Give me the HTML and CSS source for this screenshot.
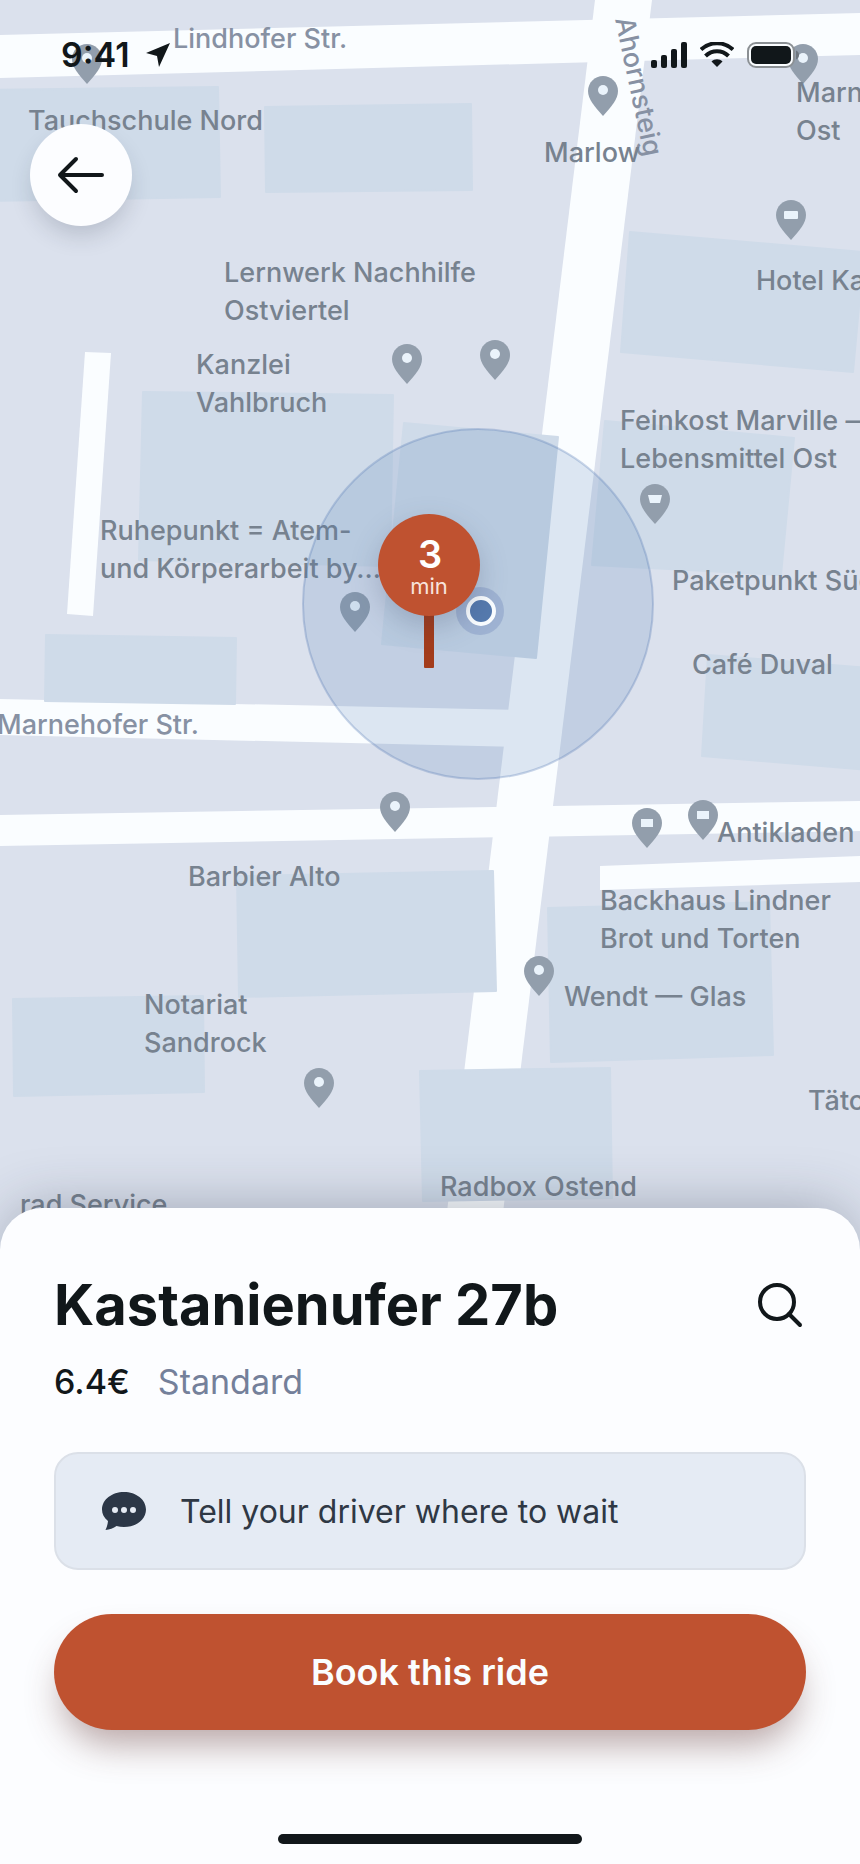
FILE: index.html
```html
<!doctype html>
<html lang="en">
    <head>
        <meta charset="utf-8">
        <title>Book a ride</title>
        <meta name="viewport" content="width=device-width, initial-scale=1">
        <link rel="stylesheet" href="styles.css">
    </head>
    <body>
        <main class="screen">
            <section class="map-area">
                <svg class="map" viewBox="0 0 860 1264" preserveAspectRatio="xMidYMin slice" role="img" aria-label="Map">
                    <defs>
                        <path id="pin" d="M0 0c-8.300 0-15 6.700-15 15 0 8 6.500 15.500 15 25 8.500-9.500 15-17 15-25C15 6.700 8.300 0 0 0z" />
                    </defs>

                    <g class="roads">
                        <path d="M0 35 860 13V55L0 78z" />
                        <path d="M595 0H652L491 1310H435z" />
                        <path d="M85 352 111 353 93 616 67 614z" />
                        <path d="M0 699 520 710V747L0 735z" />
                        <path d="M0 815 860 801V831L0 846z" />
                        <path d="M600 866 860 856V882L600 890z" />
                    </g>

                    <g class="buildings">
                        <path d="M-10 90 218 87 220 197-10 201z" />
                        <path d="M265 107 471 104 472 190 266 192z" />
                        <path d="M630 232 864 252 853 372 621 352z" />
                        <path d="M143 392 393 395 390 566 139 560z" />
                        <path d="M404 423 558 437 536 658 382 644z" />
                        <path d="M605 421 794 438 781 575 592 565z" />
                        <path d="M708 655 870 668V770L702 756z" />
                        <path d="M46 635 236 638 235 704 45 701z" />
                        <path d="M237 876 493 871 496 991 239 997z" />
                        <path d="M13 999 203 996 204 1092 14 1096z" />
                        <path d="M548 908 769 902 773 1055 551 1062z" />
                        <path d="M420 1071 610 1068 612 1198 423 1201z" />
                    </g>

                    <g class="pins">
                        <use href="#pin" x="87" y="44" />
                        <use href="#pin" x="603" y="76" />
                        <use href="#pin" x="803" y="44" />
                        <use href="#pin" x="791" y="200" />
                        <use href="#pin" x="407" y="344" />
                        <use href="#pin" x="495" y="340" />
                        <use href="#pin" x="355" y="592" />
                        <use href="#pin" x="655" y="484" />
                        <use href="#pin" x="395" y="792" />
                        <use href="#pin" x="647" y="808" />
                        <use href="#pin" x="703" y="800" />
                        <use href="#pin" x="539" y="956" />
                        <use href="#pin" x="319" y="1068" />
                    </g>

                    <g class="pin-marks">
                        <circle cx="87" cy="58" r="5" />
                        <circle cx="603" cy="90" r="5" />
                        <circle cx="803" cy="58" r="5" />
                        <circle cx="407" cy="358" r="5" />
                        <circle cx="495" cy="354" r="5" />
                        <circle cx="355" cy="606" r="5" />
                        <circle cx="395" cy="806" r="5" />
                        <circle cx="539" cy="970" r="5" />
                        <circle cx="319" cy="1082" r="5" />
                        <rect x="784" y="211" width="14" height="8" rx="1" />
                        <rect x="641" y="819" width="12" height="8" />
                        <rect x="697" y="811" width="12" height="8" />
                        <path d="M648 495h14l-2 8h-10z" />
                    </g>

                    <g class="streets">
                        <text x="173" y="48">Lindhofer Str.</text>
                        <text x="-3" y="734">Marnehofer Str.</text>
                        <text transform="translate(615 19) rotate(78)">Ahornsteig</text>
                    </g>

                    <g class="places">
                        <text x="28" y="130">Tauchschule Nord</text>
                        <text x="544" y="162">Marlow</text>
                        <text x="796" y="102">Marnehof</text>
                        <text x="796" y="140">Ost</text>
                        <text x="756" y="290">Hotel Kastanie</text>
                        <text x="224" y="282">Lernwerk Nachhilfe</text>
                        <text x="224" y="320">Ostviertel</text>
                        <text x="196" y="374">Kanzlei</text>
                        <text x="196" y="412">Vahlbruch</text>
                        <text x="620" y="430">Feinkost Marville —</text>
                        <text x="620" y="468">Lebensmittel Ost</text>
                        <text x="100" y="540">Ruhepunkt = Atem-</text>
                        <text x="100" y="578">und Körperarbeit by...</text>
                        <text x="672" y="590">Paketpunkt Süd</text>
                        <text x="692" y="674">Café Duval</text>
                        <text x="717" y="842">Antikladen</text>
                        <text x="188" y="886">Barbier Alto</text>
                        <text x="600" y="910">Backhaus Lindner</text>
                        <text x="600" y="948">Brot und Torten</text>
                        <text x="564" y="1006">Wendt — Glas</text>
                        <text x="144" y="1014">Notariat</text>
                        <text x="144" y="1052">Sandrock</text>
                        <text x="808" y="1110">Tätowierer</text>
                        <text x="440" y="1196">Radbox Ostend</text>
                        <text x="20" y="1214">rad Service</text>
                    </g>

                    <!-- accuracy radius and pickup marker -->
                    <circle class="radius" cx="478" cy="604" r="175" />
                    <rect class="marker-stem" x="424" y="600" width="10" height="68" rx="1" />
                    <circle class="halo" cx="480" cy="611" r="24" />
                    <circle class="position" cx="481" cy="611" r="13" />
                    <circle class="marker" cx="429" cy="565" r="51" />
                    <text class="marker-count" x="430" y="568">3</text>
                    <text class="marker-unit" x="429" y="594">min</text>
                </svg>

                <header class="status">
                    <span class="time">9:41</span>
                    <svg class="location" width="24" height="24" viewBox="0 0 24 24"><path d="M24 0 13 24 11 13 0 10z" /></svg>
                    <span class="indicators">
                        <svg width="36" height="26" viewBox="0 0 36 26">
                            <rect x="0" y="18" width="6" height="8" rx="2" />
                            <rect x="10" y="13" width="6" height="13" rx="2" />
                            <rect x="20" y="7" width="6" height="19" rx="2" />
                            <rect x="30" y="0" width="6" height="26" rx="2" />
                        </svg>
                        <svg class="wifi" width="34" height="26" viewBox="0 0 34 26">
                            <path class="wave" d="M1 7.500C10-.8 24-.8 33 7.500M5.500 14c6.500-6.500 16.500-6.500 23 0" />
                            <path d="M11.500 19.500c3-3 8-3 11 0L17 25z" />
                        </svg>
                        <svg width="53" height="26" viewBox="0 0 53 26">
                            <rect class="battery-case" x="1" y="1" width="46" height="24" rx="8" />
                            <rect x="4" y="4" width="40" height="18" rx="5" />
                            <path class="battery-tip" d="M49 8.500c4 1 4 8 0 9z" />
                        </svg>
                    </span>
                </header>

                <button class="back" type="button" aria-label="Back">
                    <svg width="50" height="40" viewBox="0 0 50 40"><path d="M46 20H4M20 4 4 20l16 16" /></svg>
                </button>
            </section>

            <section class="sheet">
                <div class="heading">
                    <h1>Kastanienufer 27b</h1>
                    <button class="search" type="button" aria-label="Search">
                        <svg width="48" height="48" viewBox="0 0 48 48"><circle cx="21" cy="21" r="17" /><path d="M33 33 44 44" /></svg>
                    </button>
                </div>
                <p class="fare"><span>6.4€</span><span class="tier">Standard</span></p>

                <label class="note">
                    <svg width="44" height="38" viewBox="0 0 44 38">
                        <path d="M22 0C10 0 0 7.500 0 17.500c0 4.500 2 8.300 6 11.500-.3 3-1 6-2.500 9 4-.4 8-1.800 11-4 2.400.7 4.900 1 7.500 1 12.500 0 22-7.500 22-17.500S34 0 22 0z" />
                        <g class="dots"><circle cx="13" cy="18" r="3" /><circle cx="22" cy="18" r="3" /><circle cx="31" cy="18" r="3" /></g>
                    </svg>
                    <input type="text" placeholder="Tell your driver where to wait" aria-label="Tell your driver where to wait">
                </label>

                <button class="book" type="button">Book this ride</button>
                <div class="home-bar"></div>
            </section>
        </main>
    </body>
</html>
```

FILE: styles.css
```css
* {
    box-sizing: border-box;
}

body {
    margin: 0;
    font-family: Inter, "Liberation Sans", sans-serif;
    color: #11171a;
    background: #dbe1ed;
}

button {
    padding: 0;
    border: 0;
    font-family: inherit;
    cursor: pointer;
}

svg {
    display: block;
}

.screen {
    display: flex;
    flex-direction: column;
    min-height: 100vh;
}

/* Map */

.map-area {
    position: relative;
    flex: 1;
    min-height: 640px;
    margin-bottom: -56px;
    padding: 36px 60px 0 30px;
    overflow: hidden;
}

.map {
    position: absolute;
    top: 0;
    left: 0;
    width: 100%;
    height: 100%;
}

.roads {
    fill: #fafdff;
}

.buildings {
    fill: #cfdbe9;
    stroke: #cfdbe9;
    stroke-width: 2px;
    stroke-linejoin: round;
}

.pins {
    fill: #929eac;
}

.pin-marks {
    fill: #eaf3fb;
}

.places,
.streets {
    font-size: 27px;
    font-weight: 500;
    fill: #77828f;
}

.streets {
    fill: #8791a3;
}

.radius {
    fill: rgba(72, 119, 175, 0.17);
    stroke: rgba(82, 118, 178, 0.3);
    stroke-width: 2px;
}

.halo {
    fill: rgba(92, 118, 175, 0.28);
}

.position {
    fill: #557aae;
    stroke: #fafdff;
    stroke-width: 4px;
}

.marker {
    fill: #bf5230;
    filter: drop-shadow(0 10px 14px rgba(40, 50, 80, 0.22));
}

.marker-stem {
    fill: #a33c1b;
}

.marker-count,
.marker-unit {
    fill: #fff;
    font-size: 38px;
    font-weight: 600;
    text-anchor: middle;
}

.marker-unit {
    fill: #f8e3dc;
    font-size: 22px;
    font-weight: 400;
}

/* Status bar */

.status {
    position: relative;
    display: flex;
    align-items: center;
    height: 38px;
    padding-left: 31px;
}

.time {
    font-size: 34px;
    font-weight: 600;
    line-height: 36px;
}

.status svg {
    fill: #11171a;
}

.location {
    margin-left: 16px;
}

.indicators {
    display: flex;
    gap: 13px;
    margin-left: auto;
}

.status .wave {
    fill: none;
    stroke: #11171a;
    stroke-width: 4px;
}

.status .battery-case {
    fill: #fafdff;
    stroke: #8b9094;
    stroke-width: 2px;
}

.status .battery-tip {
    fill: #6d757e;
}

.back {
    position: relative;
    display: grid;
    place-items: center;
    width: 102px;
    height: 102px;
    margin-top: 50px;
    border-radius: 50%;
    background: #fcfdff;
    box-shadow: 0 12px 24px -4px rgba(30, 40, 60, 0.2);
}

.back svg,
.search svg {
    fill: none;
    stroke: #11171a;
    stroke-width: 4px;
    stroke-linecap: round;
    stroke-linejoin: round;
}

/* Bottom sheet */

.sheet {
    position: relative;
    padding: 60px 54px 20px;
    border-radius: 42px 42px 0 0;
    background: #fcfdff;
    box-shadow: 0 -8px 56px -8px rgba(40, 50, 70, 0.34);
}

.heading {
    display: flex;
    align-items: center;
    justify-content: space-between;
}

h1 {
    margin: 0;
    font-size: 56px;
    font-weight: 700;
    line-height: 74px;
}

.search {
    margin-right: 2px;
    background: none;
}

.fare {
    display: flex;
    gap: 28px;
    margin: 18px 0 0;
    font-size: 34px;
    font-weight: 500;
    line-height: 44px;
}

.tier {
    color: #74809a;
    font-weight: 400;
}

.note {
    display: flex;
    align-items: center;
    gap: 34px;
    height: 118px;
    margin-top: 48px;
    padding: 0 46px;
    border: 2px solid #dbe0e8;
    border-radius: 24px;
    background: #e5ebf4;
}

.note svg {
    fill: #2c3747;
}

.note .dots {
    fill: #e5ebf4;
}

.note input {
    flex: 1;
    min-width: 0;
    padding: 0;
    border: 0;
    outline: 0;
    background: none;
    font-family: inherit;
    font-size: 32px;
    color: #2f3844;
}

.note input::placeholder {
    color: #2f3844;
    opacity: 1;
}

.book {
    display: block;
    width: 100%;
    height: 116px;
    margin-top: 44px;
    border-radius: 58px;
    background: #bf5230;
    box-shadow: 0 22px 36px -8px rgba(90, 45, 40, 0.42);
    color: #fafdff;
    font-size: 36px;
    font-weight: 600;
}

.home-bar {
    width: 304px;
    max-width: 60%;
    height: 10px;
    margin: 104px auto 0;
    border-radius: 5px;
    background: #11171a;
}
```
